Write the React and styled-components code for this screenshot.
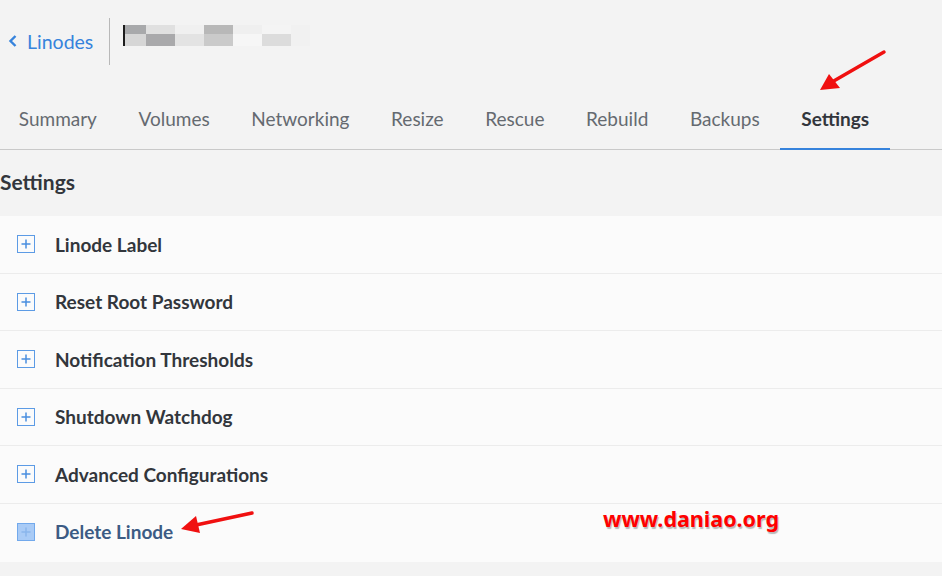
import React from 'react';
import styled, { createGlobalStyle } from 'styled-components';

const GlobalStyle = createGlobalStyle`
  html, body {
    margin: 0;
    padding: 0;
    background: #f3f3f3;
    font-family: Lato, "Noto Sans", sans-serif;
    overflow: hidden;
  }
`;

const Page = styled.div`
  position: relative;
  width: 942px;
  height: 576px;
  background: #f3f3f3;
`;

const Header = styled.div`
  display: flex;
  align-items: center;
  height: 82px;
`;

const BackLink = styled.a`
  display: flex;
  align-items: center;
  gap: 9px;
  padding: 0 16px 0 8px;
  color: #3683dc;
  font-size: 19.5px;
  text-decoration: none;
`;

const Divider = styled.div`
  width: 1px;
  height: 47px;
  background: #b8b8b8;
  margin-right: 13px;
`;

const Blur = styled.div`
  align-self: flex-start;
  margin-top: 25px;
  display: grid;
  grid-template-columns: 21px 29px 29px 29px 29px 29px 19px;
  grid-template-rows: 9px 12px;
  border-left: 2px solid #1c1c1c;
`;

const Pixel = styled.div`
  background: ${(p) => p.color};
`;

const Tabs = styled.div`
  display: flex;
  height: 67px;
  margin-left: -2px;
  border-bottom: 1px solid #c9c9c9;
`;

const Tab = styled.div`
  display: flex;
  align-items: flex-end;
  padding: 0 20.8px 18px;
  font-size: 19px;
  line-height: 22px;
  color: ${(p) => (p.active ? '#32363c' : '#656a70')};
  font-weight: ${(p) => (p.active ? 700 : 400)};
  border-bottom: 2px solid ${(p) => (p.active ? '#3683dc' : 'transparent')};
  margin-bottom: -1px;
`;

const Title = styled.h1`
  margin: 0;
  height: 66px;
  display: flex;
  align-items: center;
  box-sizing: border-box;
  padding-bottom: 3px;
  font-size: 21px;
  font-weight: 700;
  color: #32363c;
`;

const Panel = styled.div`
  background: #fbfbfb;
  padding-bottom: 2px;
`;

const Row = styled.div`
  display: flex;
  align-items: center;
  height: 56.5px;
  padding-left: 17px;
  gap: 20px;
  & + & {
    border-top: 1px solid #ececec;
  }
`;

const PlusBox = styled.div`
  width: 16px;
  height: 16px;
  border: 1.5px solid ${(p) => (p.muted ? '#72a9ec' : '#5c9be5')};
  background: ${(p) => (p.muted ? '#a9cbf6' : '#fbfbfb')};
  display: flex;
  align-items: center;
  justify-content: center;
`;

const RowLabel = styled.span`
  font-size: 19px;
  font-weight: 700;
  color: ${(p) => (p.muted ? '#3c5b84' : '#32363c')};
`;

const Overlay = styled.svg`
  position: absolute;
  left: 0;
  top: 0;
  pointer-events: none;
`;

const Watermark = styled.div`
  position: absolute;
  left: 603px;
  top: 504px;
  font-family: "Noto Sans", "DejaVu Sans", sans-serif;
  font-size: 21.5px;
  font-weight: 700;
  color: #ff0000;
  text-shadow: 1px 2px 1px #b9b9b9;
`;

const blurRows = [
  ['#a8a9ab', '#e0e0e0', '#f0f0f0', '#b8b8b8', '#efefef', '#f4f4f4', '#f1f1f1'],
  ['#d6d6d6', '#a9a9ab', '#e3e3e3', '#cacaca', '#f6f6f6', '#dcdcdc', '#f1f1f1'],
];

const tabs = ['Summary', 'Volumes', 'Networking', 'Resize', 'Rescue', 'Rebuild', 'Backups', 'Settings'];

const items = [
  'Linode Label',
  'Reset Root Password',
  'Notification Thresholds',
  'Shutdown Watchdog',
  'Advanced Configurations',
];

const Plus = ({ color }) => (
  <svg width="12" height="12" viewBox="0 0 12 12">
    <path d="M6 1.5v9M1.5 6h9" stroke={color} strokeWidth="1.5" />
  </svg>
);

const App = () => (
  <Page>
    <GlobalStyle />
    <Header>
      <BackLink>
        <svg width="10" height="14" viewBox="0 0 10 14">
          <path d="M7.5 2 2.5 7l5 5" fill="none" stroke="#3683dc" strokeWidth="2.4" />
        </svg>
        Linodes
      </BackLink>
      <Divider />
      <Blur>
        {blurRows.flat().map((c, i) => (
          <Pixel key={i} color={c} />
        ))}
      </Blur>
    </Header>
    <Tabs>
      {tabs.map((t) => (
        <Tab key={t} active={t === 'Settings'}>
          {t}
        </Tab>
      ))}
    </Tabs>
    <Title>Settings</Title>
    <Panel>
      {items.map((label) => (
        <Row key={label}>
          <PlusBox>
            <Plus color="#4a8fe0" />
          </PlusBox>
          <RowLabel>{label}</RowLabel>
        </Row>
      ))}
      <Row>
        <PlusBox muted>
          <Plus color="#8ab6ec" />
        </PlusBox>
        <RowLabel muted>Delete Linode</RowLabel>
      </Row>
    </Panel>
    <Watermark>www.daniao.org</Watermark>
    <Overlay width="942" height="576">
      <line x1="884" y1="52" x2="832" y2="82" stroke="#f01010" strokeWidth="3.5" strokeLinecap="round" />
      <polygon points="820,90 829,74 840,88" fill="#f01010" />
      <line x1="252" y1="513" x2="196" y2="525" stroke="#f01010" strokeWidth="3.5" strokeLinecap="round" />
      <polygon points="181,529 196,516 200,533" fill="#f01010" />
    </Overlay>
  </Page>
);

export default App;
